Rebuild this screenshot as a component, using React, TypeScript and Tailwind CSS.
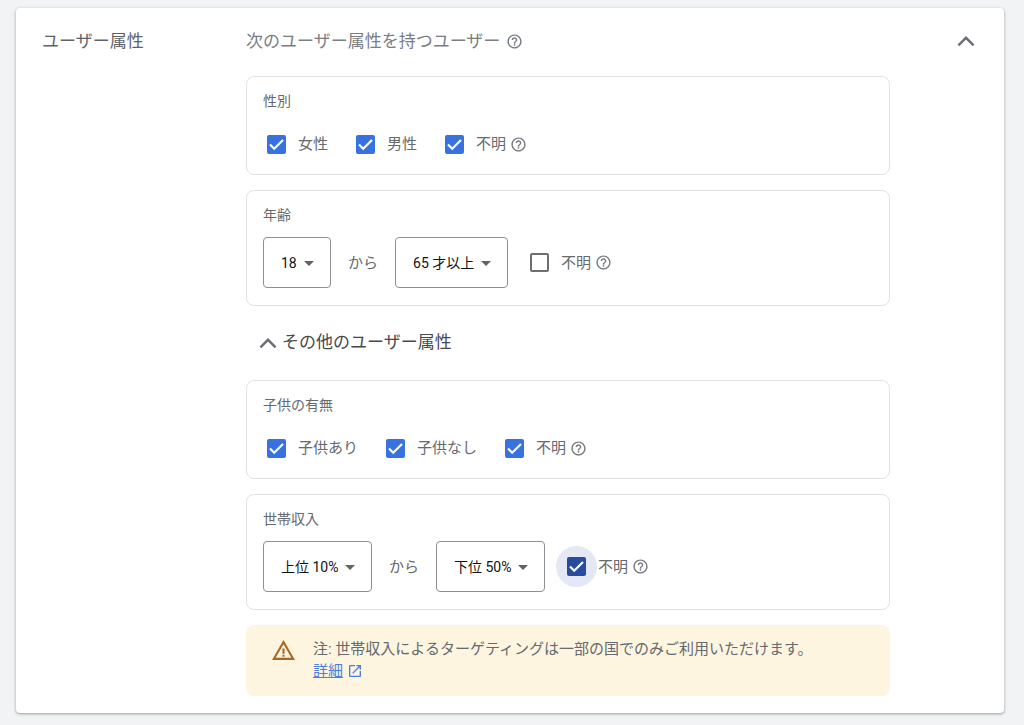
import React, { useId } from 'react';
import { MdArrowDropDown, MdHelpOutline, MdOpenInNew, MdWarningAmber } from 'react-icons/md';

const ChevronUp: React.FC = () => (
  <svg viewBox="0 0 24 24" className="size-6 shrink-0" fill="none" stroke="currentColor" strokeWidth="2.4" aria-hidden="true">
    <path d="M4.4 16.4 12 8.8l7.6 7.6" />
  </svg>
);

const HelpButton: React.FC = () => (
  <button type="button" aria-label="ヘルプ" className="shrink-0 text-[#75797e]">
    <MdHelpOutline className="size-[17px]" />
  </button>
);

interface CheckboxProps {
  label: string;
  checked?: boolean;
  active?: boolean;
  help?: boolean;
}

const Checkbox: React.FC<CheckboxProps> = ({ label, checked = false, active = false, help = false }) => {
  const id = useId();

  return (
    <div className="flex items-center gap-1">
      <div className="flex items-center gap-3">
        <span className="relative grid size-[19px] shrink-0">
          {active && <span className="absolute -inset-[11px] rounded-full bg-[#e4e8f4]" />}
          <input
            id={id}
            type="checkbox"
            defaultChecked={checked}
            className={
              active
                ? 'peer relative col-start-1 row-start-1 size-full appearance-none rounded-xs border-2 border-[#5f6368] checked:border-[#264b9f] checked:bg-[#264b9f]'
                : 'peer relative col-start-1 row-start-1 size-full appearance-none rounded-xs border-2 border-[#6b6f74] checked:border-[#3871e0] checked:bg-[#3871e0]'
            }
          />
          <svg
            viewBox="0 0 19 19"
            className="pointer-events-none relative col-start-1 row-start-1 hidden size-full text-white peer-checked:block"
            fill="none"
            stroke="currentColor"
            strokeWidth="2.1"
            aria-hidden="true"
          >
            <path d="M3 9.6 7.2 13.8 16 5" />
          </svg>
        </span>
        <label htmlFor={id} className="text-[15px] leading-[22px]">
          {label}
        </label>
      </div>
      {help && <HelpButton />}
    </div>
  );
};

interface DropdownProps {
  label: string;
  options: string[];
  className: string;
}

const Dropdown: React.FC<DropdownProps> = ({ label, options, className }) => (
  <div className={`grid h-[51px] shrink-0 items-center ${className}`}>
    <select
      aria-label={label}
      className="col-start-1 row-start-1 size-full appearance-none rounded-sm border border-[#8b9095] bg-white pl-[17px] text-sm text-[#111214]"
    >
      {options.map((option) => (
        <option key={option}>{option}</option>
      ))}
    </select>
    <MdArrowDropDown className="pointer-events-none col-start-1 row-start-1 mr-[10px] size-6 justify-self-end text-[#5f6368]" />
  </div>
);

const Panel: React.FC<{ title: string; children: React.ReactNode }> = ({ title, children }) => (
  <fieldset className="rounded-lg border border-[#e2e3e5] px-4 pt-[14px]">
    <legend className="float-left w-full text-sm leading-5">{title}</legend>
    <div className="clear-both pt-3">{children}</div>
  </fieldset>
);

const CheckboxRow: React.FC<{ items: CheckboxProps[] }> = ({ items }) => (
  <div className="mb-[9px] flex h-[42px] items-center gap-7 pl-1">
    {items.map((item) => (
      <Checkbox key={item.label} {...item} />
    ))}
  </div>
);

const RangeRow: React.FC<{ from: React.ReactNode; to: React.ReactNode; unknown: React.ReactNode }> = ({
  from,
  to,
  unknown,
}) => (
  <div className="mb-[17px] flex items-center gap-[22px]">
    <div className="flex items-center gap-[17px]">
      {from}
      <span className="text-[15px] leading-[22px]">から</span>
      {to}
    </div>
    {unknown}
  </div>
);

const genders: CheckboxProps[] = [
  { label: '女性', checked: true },
  { label: '男性', checked: true },
  { label: '不明', checked: true, help: true },
];

const parentalStatuses: CheckboxProps[] = [
  { label: '子供あり', checked: true },
  { label: '子供なし', checked: true },
  { label: '不明', checked: true, help: true },
];

const App: React.FC = () => {
  return (
    <div className="min-h-screen bg-[#f1f3f4] pt-2 pr-5 pb-3 pl-4 font-['Roboto','Noto_Sans_CJK_JP',sans-serif] text-[#66696e]" lang="ja">
      <section className="flex items-start rounded-sm bg-white px-[26px] pt-5 pb-[17px] shadow-[0_1px_2px_rgba(60,64,67,0.3),0_1px_3px_1px_rgba(60,64,67,0.15)]">
        <h2 className="w-[204px] shrink-0 text-[17px] leading-[26px] text-[#5f6368]">ユーザー属性</h2>

        <div className="min-w-0 flex-1">
          <div className="mb-[22px] flex items-center gap-1.5 text-[17px] leading-[26px] text-[#7a7d82]">
            <span>次のユーザー属性を持つユーザー</span>
            <HelpButton />
          </div>

          <div className="flex flex-col gap-[15px]">
            <Panel title="性別">
              <CheckboxRow items={genders} />
            </Panel>

            <Panel title="年齢">
              <RangeRow
                from={<Dropdown label="年齢の下限" options={['18', '25', '35', '45', '55', '65']} className="w-[68px]" />}
                to={
                  <Dropdown
                    label="年齢の上限"
                    options={['65 才以上', '64', '54', '44', '34', '24']}
                    className="w-[113px]"
                  />
                }
                unknown={<Checkbox label="不明" help />}
              />
            </Panel>

            <button type="button" className="flex h-11 items-center gap-0.5 self-start pl-[10px] text-[17px] text-[#46494d]">
              <span className="text-[#6b6f74]">
                <ChevronUp />
              </span>
              その他のユーザー属性
            </button>

            <Panel title="子供の有無">
              <CheckboxRow items={parentalStatuses} />
            </Panel>

            <Panel title="世帯収入">
              <RangeRow
                from={
                  <Dropdown
                    label="世帯収入の上限"
                    options={['上位 10%', '11～20%', '21～30%', '31～40%', '41～50%']}
                    className="w-[109px]"
                  />
                }
                to={
                  <Dropdown
                    label="世帯収入の下限"
                    options={['下位 50%', '41～50%', '31～40%', '21～30%', '11～20%']}
                    className="w-[109px]"
                  />
                }
                unknown={<Checkbox label="不明" checked active help />}
              />
            </Panel>

            <div className="flex items-start gap-[17px] rounded-lg bg-[#fdf5e0] px-[25px] pt-[13px] pb-[14px]">
              <MdWarningAmber className="size-[25px] shrink-0 text-[#a9681f]" />
              <div className="text-[15px] leading-[22px]">
                <p>注: 世帯収入によるターゲティングは一部の国でのみご利用いただけます。</p>
                <a href="#details" className="inline-flex items-center gap-1 align-top text-[#4a7fe0]">
                  <span className="underline">詳細</span>
                  <MdOpenInNew className="size-4" />
                </a>
              </div>
            </div>
          </div>
        </div>

        <button type="button" aria-label="折りたたむ" aria-expanded="true" className="ml-16 shrink-0 py-px text-[#6b6f74]">
          <ChevronUp />
        </button>
      </section>
    </div>
  );
};

export default App;
